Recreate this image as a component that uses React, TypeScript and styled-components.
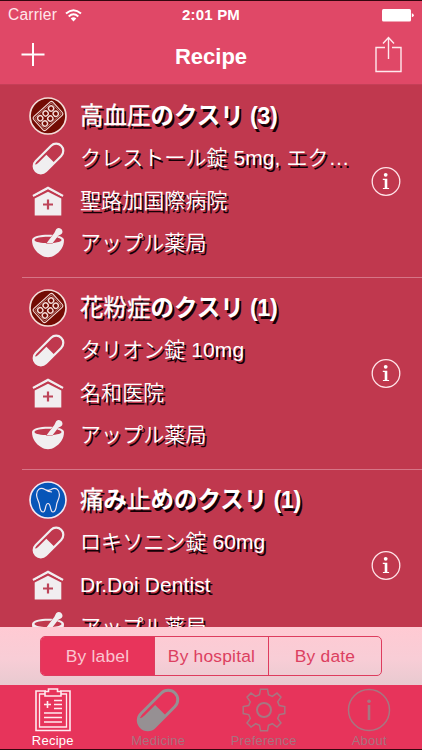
import React from 'react';
import styled, { createGlobalStyle } from 'styled-components';

const Global = createGlobalStyle`
  * { box-sizing: border-box; }
  body { margin: 0; background: #c0384e; }
  button { font: inherit; color: inherit; background: none; border: 0; padding: 0; margin: 0; }
  svg { display: block; }
`;

const Screen = styled.div`
  width: 422px;
  height: 750px;
  display: flex;
  flex-direction: column;
  overflow: hidden;
  background: #c0384e;
  border-top: 1px solid #35060f;
  border-bottom: 1px solid #35060f;
  color: #fff;
  font-family: 'Liberation Sans', 'Noto Sans CJK JP', sans-serif;
`;

const Header = styled.header`
  height: 84px;
  flex: none;
  background: #e04867;
  border-bottom: 1px solid #c43f57;
`;

const StatusBar = styled.div`
  height: 28px;
  padding: 0 8px;
  display: grid;
  grid-template-columns: 1fr auto 1fr;
  align-items: center;
  font-size: 15px;
  line-height: 28px;
`;

const Carrier = styled.div`
  display: flex;
  align-items: center;
  gap: 8px;
  color: #ffe6eb;
  font-size: 15.6px;
  letter-spacing: 0.2px;
`;

const Clock = styled.div`
  font-weight: 700;
  font-size: 15px;
  letter-spacing: 0.2px;
`;

const Battery = styled.div`
  display: flex;
  justify-content: flex-end;
`;

const NavBar = styled.div`
  height: 55px;
  display: grid;
  grid-template-columns: 66px 1fr 66px;
  align-items: center;
  justify-items: center;
`;

const NavButton = styled.button`
  padding: 0 1px 3px 0;
`;

const Title = styled.h1`
  margin: 0;
  font-size: 22px;
  font-weight: 700;
  line-height: 54px;
`;

const List = styled.main`
  height: 542px;
  flex: none;
  overflow: hidden;
  padding-top: 1px;
`;

const Recipe = styled.article`
  height: 192px;
  margin-left: 22px;
  padding-top: 8px;
  display: grid;
  grid-template-columns: 328px 72px;
  border-bottom: 1px solid #d67587;
`;

const Lines = styled.div`
  display: grid;
  grid-template-rows: 43px 42px 43px 42px;
`;

const Line = styled.div`
  display: grid;
  grid-template-columns: 52px 1fr;
  justify-items: center;
  align-items: center;
`;

const Label = styled.div<{ $heading?: boolean }>`
  justify-self: start;
  height: 42px;
  line-height: 42px;
  padding-left: 6px;
  white-space: pre;
  font-weight: ${p => (p.$heading ? 700 : 350)};
  font-size: ${p => (p.$heading ? 23.5 : 21)}px;
  letter-spacing: ${p => (p.$heading ? 0 : 0.08)}px;
  text-shadow: 2px 3px 0 #150006;
`;

const Run = styled.span<{ $kind: 'kanji' | 'kana' | 'bold' }>`
  display: inline-block;
  font-weight: ${p => (p.$kind === 'kanji' ? 400 : 700)};
  -webkit-text-stroke: ${p => (p.$kind === 'kanji' ? '0.3px #fff' : '0')};
  letter-spacing: ${p => (p.$kind === 'bold' ? -0.4 : 0)}px;
`;

const Info = styled.button`
  align-self: start;
  justify-self: center;
  margin-top: 73px;
`;

const FilterBar = styled.div`
  height: 58px;
  flex: none;
  padding: 9px 40px 0;
  background: linear-gradient(#ffcad3, #f8cdd6 55%, #e8cad0);
`;

const Segments = styled.div`
  height: 40px;
  display: grid;
  grid-template-columns: 113px 114px 1fr;
  border: 1px solid #de3c5e;
  border-radius: 5px;
  overflow: hidden;
`;

const Segment = styled.button<{ $active?: boolean }>`
  font-size: 17.4px;
  letter-spacing: 0.2px;
  line-height: 37px;
  color: ${p => (p.$active ? '#fbc4d0' : '#dc3f60')};
  background: ${p => (p.$active ? '#e8345b' : 'transparent')};
  & + & { border-left: 1px solid #de3c5e; }
`;

const TabBar = styled.nav`
  height: 64px;
  flex: none;
  display: grid;
  grid-template-columns: repeat(4, 1fr);
  background: #e7345b;
`;

const Tab = styled.button<{ $active?: boolean }>`
  display: flex;
  flex-direction: column;
  align-items: center;
  padding-top: 3px;
  font-size: 13px;
  line-height: 18px;
  letter-spacing: 0.25px;
  color: ${p => (p.$active ? '#fff' : '#a8727f')};
`;

const Blister = () => (
  <svg width="40" height="40" viewBox="0 0 40 40" fill="none" stroke="#f4dcd8">
    <circle cx="20" cy="20" r="18" fill="#730c04" strokeWidth="1.7" />
    <g transform="rotate(-42 20 20)" strokeWidth="1.1">
      <rect x="7" y="11" width="26" height="18" rx="2" />
      <rect x="8.6" y="12.6" width="22.8" height="14.8" rx="1" strokeWidth=".5" />
      {[12.7, 20, 27.3].map(x => [16.5, 23.5].map(y => <circle key={`${x}-${y}`} cx={x} cy={y} r="2.6" strokeWidth="1.4" />))}
    </g>
  </svg>
);

const Tooth = () => (
  <svg width="40" height="40" viewBox="0 0 40 40" fill="none" stroke="#f3e8f2">
    <circle cx="20" cy="20" r="18" fill="#0755b8" strokeWidth="1.7" />
    <path d="M17 9.500C12 6.500 8 10 8.700 16c.5 3.500 2.200 5.200 2.700 8.500.5 3.700.8 7.500 3.700 7.500 3.200 0 1.500-8.500 4.900-8.500s1.700 8.500 4.900 8.500c2.900 0 3.200-3.800 3.700-7.500.5-3.300 2.200-5 2.700-8.500.7-6-3.300-9.500-8.300-6.500-2.500 1.400-4.100 1-6 0Zm0 0c2.500 1.800 4 2.500 7 2.500" strokeWidth="1.200" strokeLinejoin="round" />
  </svg>
);

const Capsule = ({ size = 33, color = '#f0eff0' }) => (
  <svg width={size} height={size} viewBox="0 0 36 36">
    <g transform="rotate(45 18 18)">
      <rect x="10.200" y="-1.600" width="15.600" height="39.200" rx="7.800" fill="none" stroke={color} strokeWidth="2.400" />
      <path d="M13.400 16.700H25.800V30a7.800 7.800 0 0 1-14.400 3.700Q13.400 33 13.400 29Z" fill={color} />
    </g>
  </svg>
);

const Hospital = () => (
  <svg width="32" height="30" viewBox="0 0 32 30">
    <path d="M1 10 16 1.800 31 10" fill="none" stroke="#f1eef0" strokeWidth="2.500" />
    <path d="M2.700 12.500 16 5.800l13.300 6.700v17H2.700Z" fill="#f1eef0" />
    <path d="M2 11.300 16 4 30 11.300" fill="none" stroke="#c0384e" strokeWidth=".8" />
    <path d="M16 13.500v10M11 18.500h10" stroke="#bd4459" strokeWidth="2.200" />
  </svg>
);

const Mortar = () => (
  <svg width="34" height="32" viewBox="0 0 34 32">
    <path d="M1 13c0 7 4 12 9 15 4 3 10 3 14 0 5-3 9-8 9-15 0-7-32-7-32 0Zm2.400 0c1-4.200 26.200-4.200 27.200 0-1 4.200-26.200 4.200-27.200 0Z" fill="#f1eef0" fillRule="evenodd" />
    <path d="M15.500 16.300 22.500 7c2-2 2-6 5.100-6 3.500 0 5 3.900 3.100 5.800-1.200 1.200-2.900 1.200-4 2.700l-5.200 6.800Z" fill="#f1eef0" stroke="#c0384e" strokeWidth=".8" paintOrder="stroke" />
  </svg>
);

const InfoIcon = () => (
  <svg width="30" height="30" viewBox="0 0 30 30">
    <circle cx="15" cy="14.500" r="13.800" fill="none" stroke="#ffe3e8" strokeWidth="1.300" />
    <circle cx="14.700" cy="7.800" r="1.900" fill="#fff" />
    <path d="M11.800 11.800h4.500v9.200h1.800v1.100h-6.200v-1.100h1.800v-8.100h-1.900Z" fill="#fff" />
  </svg>
);

const Clipboard = () => (
  <svg width="38" height="44" viewBox="0 0 38 44" fill="none" stroke="#ffeaf0" strokeWidth="1.600">
    <path d="M12 3H2v39.500h34V3H26" />
    <path d="M11 6H5.500v33h27V6H27" strokeWidth="1.300" />
    <path d="M11 3.500h3.500V1h9v2.500H27V8H11Z" />
    <path d="M13.500 13v7M10 16.500h7M20 12.500h8M20 16.500h8M20 20.500h8M10 25h18M10 29.500h18M10 34h18" />
  </svg>
);

const gearOutline = 'M18.500 1.200h7l1 5.600 3.800 1.600L35 5.100l4 4-3.300 4.700 1.600 3.800 5.500 1v7l-5.500 1-1.600 3.800L39 35l-4 4-4.700-3.300-3.800 1.600-1 5.500h-7l-1-5.500-3.800-1.600L9 39l-4-4 3.300-4.600-1.600-3.800-5.500-1v-7l5.500-1 1.600-3.800L5 9.100l4-4 4.700 3.300 3.800-1.600Z';
const Gear = () => (
  <svg width="44" height="44" viewBox="0 0 44 44" fill="none" stroke="#a77681" strokeWidth="1.500">
    <path d={gearOutline} />
    <circle cx="22" cy="22" r="7" strokeWidth="2" />
  </svg>
);

const About = () => (
  <svg width="44" height="44" viewBox="0 0 44 44" fill="none" stroke="#a77681">
    <circle cx="22" cy="22" r="20.500" strokeWidth="1.500" />
    <circle cx="22" cy="13.200" r="1.800" fill="#a77681" stroke="none" />
    <path d="M22 17v15" strokeWidth="2.600" />
  </svg>
);

type Part = ['kanji' | 'kana' | 'bold', string];
interface Entry { icon: React.ReactNode; title: Part[]; drug: string; hospital: string; pharmacy: string }

const entries: Entry[] = [
  { icon: <Blister />, title: [['kanji', '高血圧'], ['kana', 'のクスリ'], ['bold', ' (3)']], drug: 'クレストール錠 5mg, エク…', hospital: '聖路加国際病院', pharmacy: 'アップル薬局' },
  { icon: <Blister />, title: [['kanji', '花粉症'], ['kana', 'のクスリ'], ['bold', ' (1)']], drug: 'タリオン錠 10mg', hospital: '名和医院', pharmacy: 'アップル薬局' },
  { icon: <Tooth />, title: [['kanji', '痛'], ['kana', 'み'], ['kanji', '止'], ['kana', 'めのクスリ'], ['bold', ' (1)']], drug: 'ロキソニン錠 60mg', hospital: 'Dr.Doi Dentist', pharmacy: 'アップル薬局' },
];

export default function App() {
  return (
    <>
      <Global />
      <Screen>
        <Header>
          <StatusBar>
            <Carrier>
              Carrier
              <svg width="17" height="13" viewBox="0 0 17 13" fill="none" stroke="#fff" strokeWidth="2">
                <path d="M1 4.500Q8.500-2 16 4.500M3.700 7.400q4.800-4.200 9.600 0" />
                <path d="M5.700 9.500Q8.500 7 11.300 9.500L8.500 12.500Z" fill="#fff" stroke="none" />
              </svg>
            </Carrier>
            <Clock>2:01 PM</Clock>
            <Battery>
              <svg width="32" height="13" viewBox="0 0 32 13" fill="#fff">
                <rect width="29" height="12.500" rx="1.500" />
                <path d="M29.800 4.200q2 .5 2 2t-2 2Z" />
              </svg>
            </Battery>
          </StatusBar>
          <NavBar>
            <NavButton aria-label="Add">
              <svg width="24" height="24" viewBox="0 0 24 24" stroke="#fff" strokeWidth="2"><path d="M12 0v23M.5 11.500h23" /></svg>
            </NavButton>
            <Title>Recipe</Title>
            <NavButton aria-label="Share">
              <svg width="28" height="38" viewBox="0 0 28 38" fill="none" stroke="#ffe9ee" strokeWidth="1.400">
                <path d="M10 11.500H1v24h25v-24h-9M13.500 23V2M8 7.500l5.500-6 5.500 6" />
              </svg>
            </NavButton>
          </NavBar>
        </Header>
        <List>
          {entries.map((entry, i) => (
            <Recipe key={i}>
              <Lines>
                <Line>{entry.icon}<Label $heading>{entry.title.map(([kind, text], n) => <Run key={n} $kind={kind}>{text}</Run>)}</Label></Line>
                <Line><Capsule /><Label>{entry.drug}</Label></Line>
                <Line><Hospital /><Label>{entry.hospital}</Label></Line>
                <Line><Mortar /><Label>{entry.pharmacy}</Label></Line>
              </Lines>
              <Info aria-label="Details"><InfoIcon /></Info>
            </Recipe>
          ))}
        </List>
        <FilterBar>
          <Segments>
            <Segment $active>By label</Segment>
            <Segment>By hospital</Segment>
            <Segment>By date</Segment>
          </Segments>
        </FilterBar>
        <TabBar>
          <Tab $active><Clipboard />Recipe</Tab>
          <Tab><Capsule size={44} color="#969093" />Medicine</Tab>
          <Tab><Gear />Preference</Tab>
          <Tab><About />About</Tab>
        </TabBar>
      </Screen>
    </>
  );
}
